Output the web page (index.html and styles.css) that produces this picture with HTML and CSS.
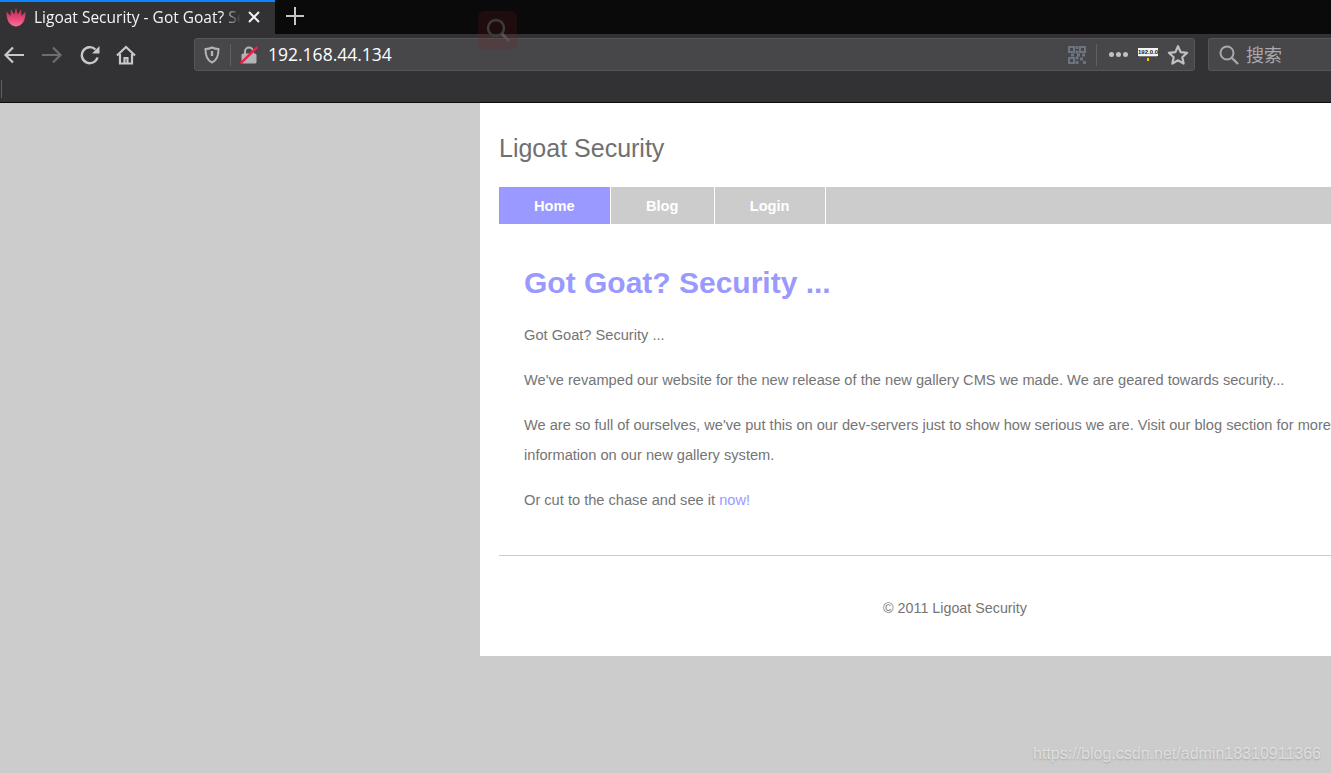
FILE: index.html
```html
<!DOCTYPE html>
<html lang="en">
<head>
    <meta charset="UTF-8">
    <title>Ligoat Security - Got Goat? Security ...</title>
    <link rel="stylesheet" href="styles.css">
</head>
<body>
    <div class="browser">
        <div class="tabbar">
            <div class="tab">
                <svg class="favicon" width="20" height="20" viewBox="0 0 20 20">
                    <defs>
                        <linearGradient id="flame" x1="0" y1="0" x2="0" y2="1">
                            <stop offset="0" stop-color="#a82a45"/>
                            <stop offset="0.6" stop-color="#e8487a"/>
                            <stop offset="1" stop-color="#fb6f9c"/>
                        </linearGradient>
                    </defs>
                    <path fill="url(#flame)" d="M0.500 4.500 L4.500 9 L4.800 2 L8.200 7.500 L10 0 L11.800 7.500 L15.200 2 L15.500 9 L19.500 4.500 C19.800 12 17 19 10 19.500 C3 19 0.200 12 0.500 4.500 Z"/>
                </svg>
                <span class="tab-title">Ligoat Security - Got Goat? Security ...</span>
                <svg class="tab-close" width="14" height="14" viewBox="0 0 14 14">
                    <path d="M2 2 L12 12 M12 2 L2 12" stroke="#f2f2f2" stroke-width="2" fill="none"/>
                </svg>
            </div>
            <svg class="new-tab" width="18" height="18" viewBox="0 0 18 18">
                <path d="M9 0 V18 M0 9 H18" stroke="#c4c4c4" stroke-width="2" fill="none"/>
            </svg>
            <div class="ghost-icon">
                <svg width="30" height="30" viewBox="0 0 30 30">
                    <circle cx="13" cy="12" r="8" stroke="#3c3c3c" stroke-width="2.500" fill="none"/>
                    <path d="M19 18 L26 25" stroke="#555" stroke-width="3"/>
                </svg>
            </div>
        </div>

        <div class="toolbar">
            <div class="nav-buttons">
                <svg width="22" height="20" viewBox="0 0 22 20">
                    <path d="M21 10 H3 M10 2.500 L2.500 10 L10 17.500" stroke="#c8c8c8" stroke-width="2.200" fill="none"/>
                </svg>
                <svg class="forward" width="22" height="20" viewBox="0 0 22 20">
                    <path d="M1 10 H19 M12 2.500 L19.500 10 L12 17.500" stroke="#6d6d6e" stroke-width="2.200" fill="none"/>
                </svg>
                <svg class="reload" width="20" height="20" viewBox="0 0 20 20">
                    <path d="M17.500 12.500 A8 8 0 1 1 15.500 4.500" stroke="#c8c8c8" stroke-width="2.400" fill="none"/>
                    <path d="M19.500 1 V8.500 H12 Z" fill="#c8c8c8"/>
                </svg>
                <svg class="home" width="20" height="20" viewBox="0 0 20 20">
                    <path d="M1 10.500 L10 2 L19 10.500" stroke="#c8c8c8" stroke-width="2.200" fill="none"/>
                    <path d="M4 9 V18.500 H16 V9 M8.500 18 V13 H11.500 V18" stroke="#c8c8c8" stroke-width="2.200" fill="none"/>
                </svg>
            </div>

            <div class="urlbar">
                <svg class="shield" width="16" height="18" viewBox="0 0 16 18">
                    <path d="M8 1.500 C10 2.500 12.500 3 14.500 3 C14.500 10 13 14.500 8 16.500 C3 14.500 1.500 10 1.500 3 C3.500 3 6 2.500 8 1.500 Z" stroke="#b4b4b4" stroke-width="2" fill="none"/>
                    <path d="M8 5 V10" stroke="#b4b4b4" stroke-width="2.400"/>
                </svg>
                <span class="url-sep"></span>
                <svg class="lock" width="18" height="20" viewBox="0 0 18 20">
                    <path d="M5 9 V6.500 A4 4 0 0 1 13 6.500 V9" stroke="#b4b4b4" stroke-width="2" fill="none"/>
                    <rect x="1.500" y="8.500" width="15" height="10" rx="1.500" fill="#b4b4b4"/>
                    <path d="M0.500 18.500 L17.500 2" stroke="#ee1e4e" stroke-width="2.400"/>
                </svg>
                <span class="url-text">192.168.44.134</span>
                <div class="url-actions">
                    <svg class="qr" width="18" height="18" viewBox="0 0 18 18">
                        <path d="M1 1 H6 V6 H1 Z M12 1 H17 V6 H12 Z M1 12 H6 V17 H1 Z" fill="none" stroke="#6b7480" stroke-width="2"/>
                        <path d="M7.500 0 H10.500 V3 H7.500 Z M7.500 4.500 H10.500 V7.500 H7.500 Z M3 7.500 H6 V10.500 H3 Z M9 7.500 H12 V10.500 H9 Z M14 7.500 H17 V10.500 H14 Z M7.500 10.500 H10.500 V13.500 H7.500 Z M12 11.500 H15 V14.500 H12 Z M7.500 15 H10.500 V18 H7.500 Z M15 15 H18 V18 H15 Z" fill="#6b7480"/>
                    </svg>
                    <span class="url-sep"></span>
                    <span class="dots"><i></i><i></i><i></i></span>
                    <div class="ext-badge">
                        <span class="ext-label">192.0.0</span>
                        <span class="ext-line"></span>
                    </div>
                    <svg width="22" height="22" viewBox="0 0 20 20">
                        <path d="M10 2 L12.400 7.400 L18.300 8 L13.900 12 L15.100 17.800 L10 14.800 L4.900 17.800 L6.100 12 L1.700 8 L7.600 7.400 Z" stroke="#c0c0c0" stroke-width="2" stroke-linejoin="round" fill="none"/>
                    </svg>
                </div>
            </div>

            <div class="searchbar">
                <svg width="22" height="22" viewBox="0 0 22 22">
                    <circle cx="9" cy="9" r="6.500" stroke="#a8a8a8" stroke-width="2" fill="none"/>
                    <path d="M13.500 13.500 L20 20" stroke="#a8a8a8" stroke-width="2.400"/>
                </svg>
                <span class="search-text">搜索</span>
            </div>
        </div>

        <div class="bookmarks">
            <span class="bookmark-sep"></span>
        </div>
    </div>

    <main class="viewport">
        <div class="page">
            <h1 class="site-title">Ligoat Security</h1>
            <ul class="menu">
                <li><a class="active" href="#">Home</a></li>
                <li><a href="#">Blog</a></li>
                <li><a href="#">Login</a></li>
            </ul>
            <div class="content">
                <h2>Got Goat? Security ...</h2>
                <p>Got Goat? Security ...</p>
                <p>We've revamped our website for the new release of the new gallery CMS we made. We are geared towards security...</p>
                <p>We are so full of ourselves, we've put this on our dev-servers just to show how serious we are. Visit our blog section for more information on our new gallery system.</p>
                <p>Or cut to the chase and see it <a href="#">now!</a></p>
            </div>
            <div class="footer">© 2011 Ligoat Security</div>
        </div>
        <span class="watermark">https://blog.csdn.net/admin18310911366</span>
    </main>
</body>
</html>
```

FILE: styles.css
```css
* {
    box-sizing: border-box;
}

html, body {
    height: 100%;
}

body {
    margin: 0;
    overflow: hidden;
    display: flex;
    flex-direction: column;
    background: #ccc;
    font-family: "Liberation Sans", Arial, sans-serif;
}

/* browser chrome */
.browser {
    flex: none;
    height: 103px;
    background: #323234;
    border-bottom: 1px solid #0c0c0d;
}

.tabbar {
    height: 34px;
    background: #0a0a0b;
    display: flex;
    align-items: center;
    position: relative;
}

.tab {
    width: 275px;
    height: 34px;
    flex: none;
    background: #323234;
    border-top: 2px solid #0a84ff;
    display: flex;
    align-items: center;
    padding: 0 14px 3px 6px;
    color: #f4f4f4;
    font-family: "Open Sans", sans-serif;
    font-size: 15.500px;
}

.favicon {
    flex: none;
}

.tab-title {
    flex: 1;
    margin-left: 8px;
    white-space: nowrap;
    overflow: hidden;
    -webkit-mask-image: linear-gradient(to right, #000 188px, transparent 207px);
    mask-image: linear-gradient(to right, #000 188px, transparent 207px);
}

.tab-close {
    flex: none;
    margin-left: 6px;
}

.new-tab {
    margin: -2px 0 0 11px;
}

.ghost-icon {
    position: absolute;
    left: 478px;
    top: 11px;
    width: 39px;
    height: 39px;
    border-radius: 6px;
    background: rgba(120, 20, 25, 0.18);
    display: flex;
    align-items: center;
    justify-content: center;
    z-index: 2;
}

.toolbar {
    height: 41px;
    display: flex;
    align-items: center;
}

.nav-buttons {
    width: 194px;
    flex: none;
    display: flex;
    align-items: center;
    padding-left: 3px;
}

.nav-buttons svg {
    margin-right: 15px;
}

.nav-buttons .forward {
    margin-left: 1px;
    margin-right: 17px;
}

.nav-buttons .reload {
    margin-right: 16px;
}

.urlbar {
    width: 1001px;
    height: 33px;
    flex: none;
    background: #47474a;
    border: 1px solid #55555a;
    border-radius: 3px;
    display: flex;
    align-items: center;
    padding: 0 5px 0 9px;
}

.url-sep {
    width: 1px;
    height: 22px;
    background: #5e5e63;
    margin: 0 9px 0 10px;
    flex: none;
}

.url-text {
    margin: 0 0 2px 10px;
    color: #fff;
    font-family: "Open Sans", sans-serif;
    font-size: 17.500px;
}

.url-actions {
    margin-left: auto;
    display: flex;
    align-items: center;
}

.dots {
    display: flex;
    gap: 2px;
    margin-left: 3px;
}

.dots i {
    width: 5px;
    height: 5px;
    border-radius: 50%;
    background: #c0c0c0;
}

.ext-badge {
    width: 20px;
    margin: 0 9px 0 10px;
    display: flex;
    flex-direction: column;
    align-items: center;
}

.ext-label {
    width: 20px;
    height: 8px;
    background: #f4f4f4;
    color: #222;
    font-size: 6px;
    font-weight: bold;
    line-height: 8px;
    text-align: center;
    overflow: hidden;
}

.ext-line {
    width: 18px;
    height: 5px;
    border-top: 1px solid #777;
    background: linear-gradient(#ffc400, #ffc400) center 1px / 2px 3px no-repeat;
}

.searchbar {
    margin-left: 13px;
    flex: 1;
    height: 33px;
    background: #47474a;
    border: 1px solid #55555a;
    border-right: none;
    border-radius: 3px 0 0 3px;
    display: flex;
    align-items: center;
    padding-left: 9px;
}

.search-text {
    margin: 0 0 2px 6px;
    color: #a9a9ad;
    font-family: "Noto Sans CJK SC", sans-serif;
    font-size: 18px;
}

.bookmarks {
    height: 27px;
    display: flex;
    align-items: center;
}

.bookmark-sep {
    width: 1px;
    height: 18px;
    background: #5e5e63;
    margin-left: 1px;
}

/* the page */
.viewport {
    flex: 1;
    position: relative;
    overflow: hidden;
    padding-left: 480px;
}

.page {
    width: 950px;
    height: 553px;
    background: #fff;
    padding: 0 19px;
    color: #757575;
    font-size: 14.630px;
}

.site-title {
    margin: 0;
    padding-top: 28px;
    height: 84px;
    font-size: 25px;
    line-height: 34px;
    font-weight: normal;
    color: #707070;
}

.menu {
    list-style: none;
    margin: 0;
    padding: 0;
    height: 37px;
    background: #ccc;
    display: flex;
}

.menu a {
    display: block;
    height: 37px;
    padding: 1px 35.300px 0 35px;
    line-height: 37px;
    color: #fff;
    font-weight: bold;
    text-decoration: none;
    border-right: 1px solid #fff;
}

.menu a.active {
    background: #99f;
}

.content {
    padding: 0 25px;
    height: 332px;
    border-bottom: 1px solid #ccc;
}

.content h2 {
    margin: 0;
    padding-top: 40px;
    height: 96px;
    color: #99f;
    font-size: 30px;
    line-height: 37px;
}

.content p {
    margin: 0 0 15px;
    line-height: 30px;
}

.content a {
    color: #99f;
    text-decoration: none;
}

.footer {
    padding-top: 42px;
    text-align: center;
    line-height: 20px;
    font-size: 14.300px;
}

.watermark {
    position: absolute;
    right: 10px;
    bottom: 10px;
    color: rgba(255, 255, 255, 0.55);
    font-size: 16px;
    text-shadow: 0 1px 2px rgba(0, 0, 0, 0.2);
}
```
